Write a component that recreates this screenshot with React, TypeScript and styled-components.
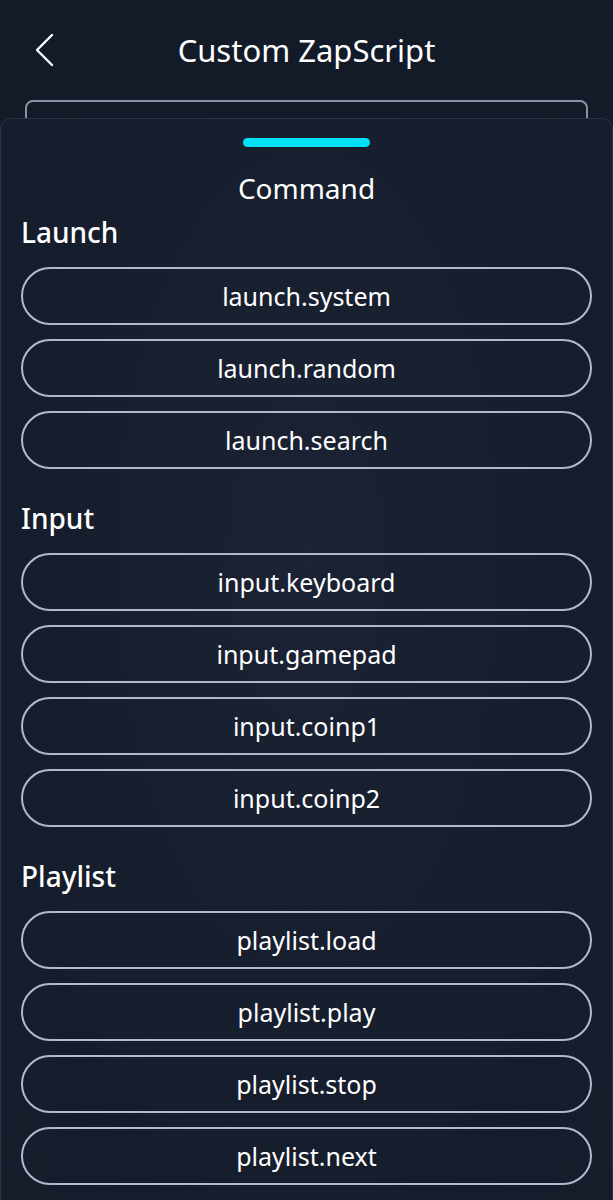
import React from "react";
import styled, { createGlobalStyle } from "styled-components";

const Global = createGlobalStyle`
  html, body { margin: 0; padding: 0; background: #121a28; }
  body { font-family: "Noto Sans", "Open Sans", sans-serif; color: #fff; }
  * { box-sizing: border-box; }
`;

const Page = styled.div`
  width: 613px;
  height: 1200px;
  overflow: hidden;
  background: #131a28;
  position: relative;
`;

const HeaderBar = styled.header`
  height: 100px;
  width: 100%;
  display: grid;
  grid-template-columns: 70px 1fr 70px;
  align-items: start;
  padding-top: 30px;
`;

const BackButton = styled.button`
  background: none;
  border: none;
  padding: 0 0 0 34px;
  height: 40px;
  display: flex;
  align-items: center;
  cursor: pointer;
`;

const Title = styled.h1`
  margin: 0;
  font-size: 31px;
  font-weight: 400;
  line-height: 40px;
  text-align: center;
  color: #fff;
`;

const Underlay = styled.div`
  margin: 0 25px;
  height: 60px;
  border: 2px solid #8c91a4;
  border-radius: 8px;
`;

const Sheet = styled.section`
  position: absolute;
  left: 0;
  right: 0;
  top: 118px;
  bottom: -20px;
  background: radial-gradient(ellipse at 50% 40%, #1b2334 0%, #161d2c 60%, #151c2a 100%);
  border: 1px solid #2b3344;
  border-radius: 11px 11px 0 0;
  padding: 19px 20px 0;
  display: flex;
  flex-direction: column;
`;

const Handle = styled.div`
  align-self: center;
  width: 127px;
  height: 9px;
  border-radius: 5px;
  background: #00e1f7;
  margin-bottom: 23px;
`;

const SheetTitle = styled.h2`
  margin: 0 0 8px;
  font-size: 28px;
  font-weight: 400;
  line-height: 36px;
  text-align: center;
`;

const Section = styled.div`
  display: flex;
  flex-direction: column;
  & + & { margin-top: 31px; }
`;

const SectionTitle = styled.h3`
  margin: 0 0 17px;
  font-size: 28px;
  font-weight: 500;
  line-height: 36px;
`;

const List = styled.div`
  display: flex;
  flex-direction: column;
  gap: 14px;
`;

const CommandButton = styled.button`
  height: 58px;
  width: 100%;
  border: 2px solid #b4b8c8;
  border-radius: 29px;
  background: transparent;
  color: #fff;
  font-family: "Noto Sans", "Open Sans", sans-serif;
  font-size: 25px;
  font-weight: 400;
  display: flex;
  align-items: center;
  justify-content: center;
  cursor: pointer;
`;

const sections = [
  { title: "Launch", items: ["launch.system", "launch.random", "launch.search"] },
  { title: "Input", items: ["input.keyboard", "input.gamepad", "input.coinp1", "input.coinp2"] },
  { title: "Playlist", items: ["playlist.load", "playlist.play", "playlist.stop", "playlist.next"] },
];

export default function App() {
  return (
    <Page>
      <Global />
      <HeaderBar>
        <BackButton aria-label="Back">
          <svg width="20" height="34" viewBox="0 0 20 34" fill="none">
            <path d="M18 2 L3 17 L18 32" stroke="#fff" strokeWidth="2.4" strokeLinecap="round" strokeLinejoin="round" />
          </svg>
        </BackButton>
        <Title>Custom ZapScript</Title>
        <span />
      </HeaderBar>
      <Underlay />
      <Sheet>
        <Handle />
        <SheetTitle>Command</SheetTitle>
        {sections.map((s) => (
          <Section key={s.title}>
            <SectionTitle>{s.title}</SectionTitle>
            <List>
              {s.items.map((i) => (
                <CommandButton key={i}>{i}</CommandButton>
              ))}
            </List>
          </Section>
        ))}
      </Sheet>
    </Page>
  );
}
